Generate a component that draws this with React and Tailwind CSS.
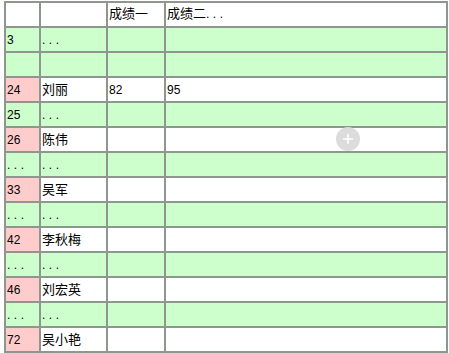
import React from 'react';

const rows = [
  { no: '3', name: '...', tone: 'green' },
  { no: '', name: '', tone: 'green' },
  { no: '24', name: '刘丽', a: '82', b: '95', tone: 'pink' },
  { no: '25', name: '...', tone: 'green' },
  { no: '26', name: '陈伟', tone: 'pink' },
  { no: '...', name: '...', tone: 'green' },
  { no: '33', name: '吴军', tone: 'pink' },
  { no: '...', name: '...', tone: 'green' },
  { no: '42', name: '李秋梅', tone: 'pink' },
  { no: '...', name: '...', tone: 'green' },
  { no: '46', name: '刘宏英', tone: 'pink' },
  { no: '...', name: '...', tone: 'green' },
  { no: '72', name: '吴小艳', tone: 'pink' },
];

function Dots({ text }) {
  if (text === '...') return <span className="tracking-[3.5px] text-[12px]">...</span>;
  return text;
}

export default function App() {
  const cell = 'border-2 border-[#8f958f] px-[1px] align-middle text-left';
  return (
    <div className="relative h-[353px] w-[449px] bg-white pl-[4px] pt-[1px] text-black" style={{ fontFamily: '"Liberation Sans", "Noto Sans CJK SC", sans-serif' }}>
      <table className="w-[444px] table-fixed border-collapse text-[13px] leading-none">
        <colgroup>
          <col className="w-[35px]" />
          <col className="w-[67px]" />
          <col className="w-[58px]" />
          <col />
        </colgroup>
        <tbody>
          <tr className="h-[25px] bg-white">
            <td className={cell}></td>
            <td className={cell}></td>
            <td className={`${cell} align-top pt-[4px]`}>成绩一</td>
            <td className={`${cell} align-top pt-[4px]`}>
              成绩二<span className="tracking-[3.5px] text-[12px]">...</span>
            </td>
          </tr>
          {rows.map((r, i) => {
            const green = r.tone === 'green';
            const rowBg = green ? 'bg-[#ccffcc]' : 'bg-white';
            return (
              <tr key={i} className={`h-[25px] ${rowBg}`}>
                <td className={`${cell} text-[12px] ${green ? '' : 'bg-[#ffcccc]'}`}>
                  <Dots text={r.no} />
                </td>
                <td className={cell}>
                  <Dots text={r.name} />
                </td>
                <td className={`${cell} text-[12px]`}>{r.a || ''}</td>
                <td className={`${cell} text-[12px]`}>{r.b || ''}</td>
              </tr>
            );
          })}
        </tbody>
      </table>
      <div className="absolute left-[336px] top-[127px] flex h-[24px] w-[24px] items-center justify-center rounded-full bg-[#dcdcdc]">
        <svg width="12" height="12" viewBox="0 0 12 12">
          <path d="M6 1v10M1 6h10" stroke="#ffffff" strokeWidth="1.6" />
        </svg>
      </div>
    </div>
  );
}
